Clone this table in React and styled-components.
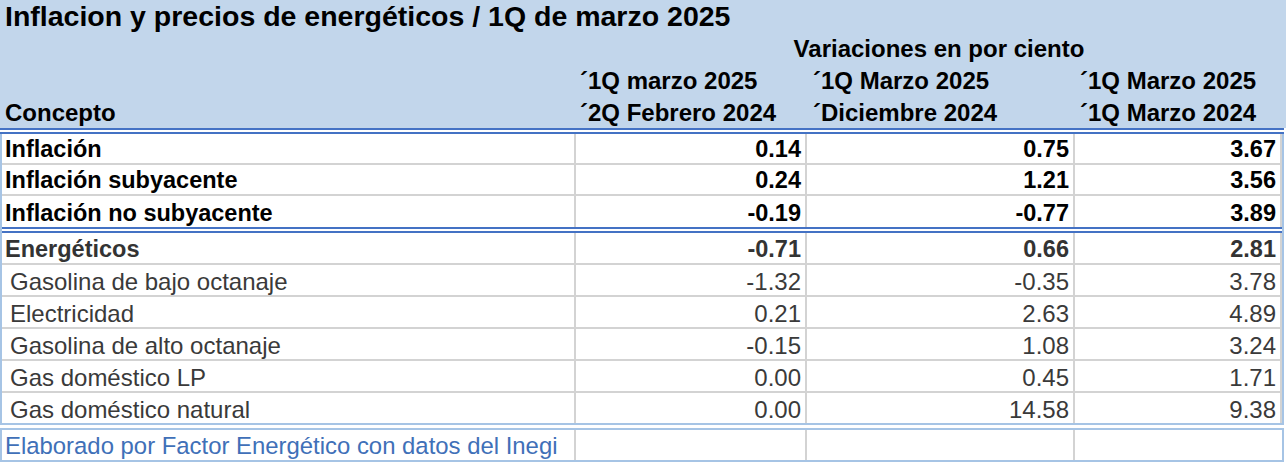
import React from "react";
import styled, { createGlobalStyle } from "styled-components";

const Global = createGlobalStyle`
  html, body { margin: 0; padding: 0; background: #ffffff; }
  body { font-family: "Liberation Sans", Arial, Helvetica, sans-serif; }
`;

const COLS = "574px 231px 268px 207px";
const GRID = "#d3d3d3";
const LIGHT_BLUE = "#a6c4e5";
const DARK_BLUE = "#4472c4";

const Sheet = styled.div`
  width: 1286px;
  color: #000;
`;

const Header = styled.header`
  background: #c2d6eb;
  padding-left: 2px;
`;

const Title = styled.h1`
  margin: 0;
  height: 32px;
  line-height: 33px;
  font-size: 28.5px;
  font-weight: 700;
  padding-left: 3px;
  white-space: nowrap;
`;

const HeadGrid = styled.div`
  display: grid;
  grid-template-columns: ${COLS};
  grid-auto-rows: 32px;
`;

const HeadCell = styled.div`
  font-size: 24px;
  font-weight: 700;
  line-height: 33px;
  white-space: nowrap;
  padding-left: ${(p) => p.$pad ?? 3}px;
  grid-column: ${(p) => p.$span || "auto"};
  text-align: ${(p) => p.$align || "left"};
`;

const DoubleRule = styled.div`
  height: 6px;
  box-sizing: border-box;
  border-top: 2px solid ${DARK_BLUE};
  border-bottom: 2px solid ${DARK_BLUE};
  background: #ffffff;
  width: ${(p) => p.$width || 1284}px;
`;

const Body = styled.section`
  width: 1284px;
  box-sizing: border-box;
  border-left: 2px solid ${LIGHT_BLUE};
  border-right: 2px solid ${LIGHT_BLUE};
  border-bottom: 2px solid ${LIGHT_BLUE};
`;

const Row = styled.div`
  display: grid;
  grid-template-columns: ${COLS};
  height: ${(p) => p.$h}px;
  box-sizing: border-box;
  border-bottom: ${(p) => (p.$last ? "none" : `2px solid ${GRID}`)};
  font-weight: ${(p) => (p.$bold ? 700 : 400)};
  color: ${(p) => p.$color || "#000"};
  font-size: ${(p) => (p.$bold ? 23.5 : 24)}px;
`;

const Cell = styled.div`
  display: flex;
  align-items: flex-end;
  justify-content: ${(p) => (p.$num ? "flex-end" : "flex-start")};
  line-height: 27px;
  white-space: nowrap;
  box-sizing: border-box;
  border-right: 2px solid ${GRID};
  padding: 0 ${(p) => (p.$num ? 4 : 0)}px 0 ${(p) => (p.$num ? 0 : p.$indent)}px;
`;

const FooterBox = styled.footer`
  margin-top: 3px;
  width: 1284px;
  box-sizing: border-box;
  border: 2px solid ${LIGHT_BLUE};
  display: grid;
  grid-template-columns: ${COLS};
  height: 34px;
`;

const FootCell = styled.div`
  display: flex;
  align-items: flex-end;
  border-right: 2px solid ${GRID};
  font-size: 23.9px;
  line-height: 27px;
  color: #4070b8;
  padding: 0 0 1px 3px;
  white-space: nowrap;
  &:last-child { border-right: none; }
`;

const topRows = [
  ["Inflación", "0.14", "0.75", "3.67"],
  ["Inflación subyacente", "0.24", "1.21", "3.56"],
  ["Inflación no subyacente", "-0.19", "-0.77", "3.89"],
];

const energyRows = [
  ["Energéticos", "-0.71", "0.66", "2.81", true],
  ["Gasolina de bajo octanaje", "-1.32", "-0.35", "3.78"],
  ["Electricidad", "0.21", "2.63", "4.89"],
  ["Gasolina de alto octanaje", "-0.15", "1.08", "3.24"],
  ["Gas doméstico LP", "0.00", "0.45", "1.71"],
  ["Gas doméstico natural", "0.00", "14.58", "9.38"],
];

export default function App() {
  return (
    <Sheet>
      <Global />
      <Header>
        <Title>Inflacion y precios de energéticos / 1Q de marzo 2025</Title>
        <HeadGrid>
          <HeadCell />
          <HeadCell $span="2 / 5" $align="center" $pad={20}>
            Variaciones en por ciento
          </HeadCell>
          <HeadCell />
          <HeadCell $pad={4}>´1Q marzo 2025</HeadCell>
          <HeadCell $pad={6}>´1Q Marzo 2025</HeadCell>
          <HeadCell $pad={5}>´1Q Marzo 2025</HeadCell>
          <HeadCell>Concepto</HeadCell>
          <HeadCell $pad={4}>´2Q Febrero 2024</HeadCell>
          <HeadCell $pad={6}>´Diciembre 2024</HeadCell>
          <HeadCell $pad={5}>´1Q Marzo 2024</HeadCell>
        </HeadGrid>
      </Header>
      <DoubleRule />
      <Body>
        {topRows.map((r, i) => (
          <Row key={r[0]} $h={31} $bold $last={i === topRows.length - 1}>
            <Cell $indent={3}>{r[0]}</Cell>
            <Cell $num>{r[1]}</Cell>
            <Cell $num>{r[2]}</Cell>
            <Cell $num>{r[3]}</Cell>
          </Row>
        ))}
        <DoubleRule $width={1280} />
        {energyRows.map((r, i) => (
          <Row
            key={r[0]}
            $h={i === energyRows.length - 1 ? 30 : 32}
            $bold={!!r[4]}
            $color={r[4] ? "#333333" : "#3a3a3a"}
            $last={i === energyRows.length - 1}
          >
            <Cell $indent={r[4] ? 3 : 8}>{r[0]}</Cell>
            <Cell $num>{r[1]}</Cell>
            <Cell $num>{r[2]}</Cell>
            <Cell $num>{r[3]}</Cell>
          </Row>
        ))}
      </Body>
      <FooterBox>
        <FootCell>Elaborado por Factor Energético con datos del Inegi</FootCell>
        <FootCell />
        <FootCell />
        <FootCell />
      </FooterBox>
    </Sheet>
  );
}
